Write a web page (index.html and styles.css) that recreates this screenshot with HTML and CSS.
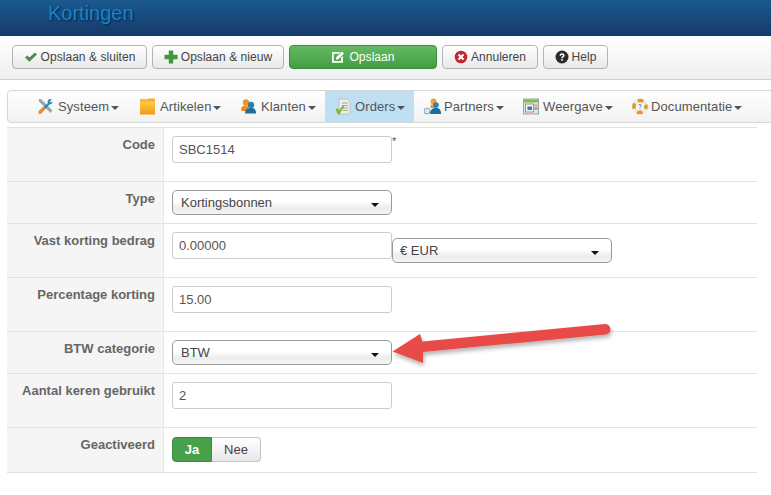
FILE: index.html
```html
<!DOCTYPE html>
<html lang="nl">
<head>
<meta charset="utf-8">
<title>Kortingen</title>
<link rel="stylesheet" href="styles.css">
</head>
<body>
<header class="titlebar"><h1 class="title">Kortingen</h1></header>

<div class="toolbar">
  <button class="btn btn-a" type="button">
    <svg class="bi" viewBox="0 0 14 14"><path d="M1 7.500 L3.200 5.400 L5.400 7.600 L10.900 2.400 L13 4.500 L5.400 11.800 Z" fill="#4a8f45"/></svg>Opslaan &amp; sluiten</button>
  <button class="btn btn-b" type="button">
    <svg class="bi" viewBox="0 0 14 14"><path d="M4.800 .5 H9.200 V4.800 H13.500 V9.200 H9.200 V13.500 H4.800 V9.200 H.5 V4.800 H4.800 Z" fill="#43953f"/></svg>Opslaan &amp; nieuw</button>
  <button class="btn btn-green" type="button">
    <svg class="bi" viewBox="0 0 14 14"><path d="M1 2 H9.500 L7.800 3.800 H2.800 V11 H10 V7.800 L12 6 V12.800 H1 Z" fill="#fff"/><path d="M5 7.500 L11 1.500 L13 3.500 L7 9.500 L5 9.500 Z" fill="#fff"/></svg>Opslaan</button>
  <button class="btn btn-c" type="button">
    <svg class="bi" viewBox="0 0 14 14"><circle cx="7" cy="7" r="6.300" fill="#c1272d"/><path d="M4.500 4.500 L9.500 9.500 M9.500 4.500 L4.500 9.500" stroke="#fff" stroke-width="2"/></svg>Annuleren</button>
  <button class="btn btn-d" type="button">
    <svg class="bi" viewBox="0 0 14 14"><circle cx="7" cy="7" r="6.500" fill="#2b2b2b"/><path d="M4.500 5.500 C4.500 2.600 9.600 2.600 9.600 5.400 C9.600 7 7.800 6.900 7.800 8.300 H6.200 C6.200 6.200 8 6.400 8 5.400 C8 4.400 6.200 4.500 6.100 5.700 Z" fill="#fff"/><rect x="6.200" y="9.100" width="1.600" height="1.600" fill="#fff"/></svg>Help</button>
</div>

<nav class="menu">
  <a class="item">
    <svg class="mi" viewBox="0 0 17 17"><path d="M2 1 L4 1 L15.500 12.500 L13.500 15 L2 3.500 Z" fill="#9aa7ad"/><path d="M15 1.500 L12 1 L10.500 3.500 L11 5 L2 13 C1 15 3 16.500 4.500 15 L12.500 6.500 L14.500 6 L16 3.500 L14 4.500 L12.800 3.400 Z" fill="#2b88b8"/><path d="M1.500 13.500 L6.500 8.500 L8.500 10.500 L3.500 15.800 C2 16.500 .8 15 1.500 13.500 Z" fill="#ee8f22"/></svg>
    <span>Systeem</span><i class="caret"></i></a>
  <a class="item">
    <svg class="mi mi-15" viewBox="0 0 15 17"><rect x="0" y="1" width="15" height="3.500" fill="#f6b93b"/><rect x="8" y=".5" width="7" height="2" fill="#f9a825"/><defs><linearGradient id="box" x1="0" y1="0" x2="0" y2="1"><stop offset="0" stop-color="#ffc94a"/><stop offset="1" stop-color="#f09a12"/></linearGradient></defs><rect x="0" y="4" width="15" height="12.500" fill="url(#box)"/></svg>
    <span>Artikelen</span><i class="caret"></i></a>
  <a class="item">
    <svg class="mi mi-15" viewBox="0 0 15 17"><circle cx="5" cy="4.500" r="3.200" fill="#f29325"/><path d="M0 12 C0 8 3 7.500 5 7.500 L8 9 L6 13 L1 13 Z" fill="#ee8a1c"/><circle cx="10" cy="7" r="3.200" fill="#2f7fb3"/><path d="M4 15.500 C4 11 7 10 10 10 C13 10 15 11 15 15.500 Z" fill="#1f6c9e"/></svg>
    <span>Klanten</span><i class="caret"></i></a>
  <a class="item active">
    <svg class="mi mi-16" viewBox="0 0 16 17"><path d="M4 1 H12 L15 4 V16 H4 Z" fill="#eeeeea" stroke="#b9b9b0" stroke-width=".8"/><path d="M7 5 H13 M7 7.500 H13 M7 10 H13 M8 12.500 H13" stroke="#a3a79c" stroke-width="1"/><path d="M.5 11.500 L2.500 10 L4 12.500 L8 7 L9.500 8 L4.500 16.500 L3 16.500 Z" fill="#86b52c"/></svg>
    <span>Orders</span><i class="caret"></i></a>
  <a class="item">
    <svg class="mi mi-tight" viewBox="0 0 17 17"><circle cx="9.500" cy="3.500" r="3" fill="#f0a030"/><path d="M6 10 L7 6.500 H12 L13 10 Z" fill="#ee9c28"/><circle cx="12" cy="7" r="2.800" fill="#2f7fb3"/><path d="M6 16 C6 11 9 10 12 10 C15 10 17 11 17 16 Z" fill="#1f6c9e"/><circle cx="3" cy="13" r="3" fill="#dfe7ee" stroke="#7b94ad" stroke-width=".8"/></svg>
    <span>Partners</span><i class="caret"></i></a>
  <a class="item">
    <svg class="mi mi-16" viewBox="0 0 16 16"><rect x=".5" y=".5" width="15" height="15" fill="#dfe6ea" stroke="#98a5ad"/><rect x="1" y="1" width="14" height="3" fill="#7dc04f"/><rect x="2.500" y="5.500" width="8" height="8" fill="#f3f6f8" stroke="#e2777b"/><rect x="4.500" y="8" width="4.500" height="3.500" fill="#2f7fb3"/><rect x="11.500" y="6" width="3" height="2" fill="#f0a030"/><rect x="11.500" y="9" width="3" height="2" fill="#6d8fa8"/></svg>
    <span>Weergave</span><i class="caret"></i></a>
  <a class="item">
    <svg class="mi mi-16 mi-tight" viewBox="0 0 16 16"><circle cx="8" cy="8" r="6" fill="none" stroke="#e9e9e4" stroke-width="3.600"/><circle cx="8" cy="8" r="6" fill="none" stroke="#e8962a" stroke-width="3.600" stroke-dasharray="5.400 4" stroke-dashoffset="2.700"/><circle cx="8" cy="8" r="3.400" fill="#f7f7f7"/><path d="M6.700 7 C6.700 5.600 9.300 5.600 9.300 7 C9.300 8 8 8 8 9 M8 10 V10.800" fill="none" stroke="#4d86b5" stroke-width="1"/></svg>
    <span>Documentatie</span><i class="caret"></i></a>
</nav>

<main class="form">
  <div class="row h54">
    <label class="lab">Code</label>
    <div class="field"><input class="inp" type="text" value="SBC1514"><sup class="req">*</sup></div>
  </div>
  <div class="row h42">
    <label class="lab">Type</label>
    <div class="field"><div class="sel">Kortingsbonnen<i class="sel-caret"></i></div></div>
  </div>
  <div class="row h54">
    <label class="lab">Vast korting bedrag</label>
    <div class="field"><input class="inp" type="text" value="0.00000"><div class="sel sel-eur">€ EUR<i class="sel-caret"></i></div></div>
  </div>
  <div class="row h54">
    <label class="lab">Percentage korting</label>
    <div class="field"><input class="inp" type="text" value="15.00"></div>
  </div>
  <div class="row h42">
    <label class="lab">BTW categorie</label>
    <div class="field"><div class="sel">BTW<i class="sel-caret"></i></div></div>
  </div>
  <div class="row h54">
    <label class="lab">Aantal keren gebruikt</label>
    <div class="field"><input class="inp" type="text" value="2"></div>
  </div>
  <div class="row h45">
    <label class="lab">Geactiveerd</label>
    <div class="field"><div class="toggle"><span class="yes">Ja</span><span class="no">Nee</span></div></div>
  </div>
</main>

<svg class="arrow" viewBox="0 0 240 60" aria-hidden="true">
  <defs><filter id="sh" x="-10%" y="-30%" width="120%" height="170%"><feDropShadow dx="1" dy="3" stdDeviation="2" flood-color="#000" flood-opacity=".3"/></filter></defs>
  <path d="M2.500 31.500 L30 14 L32.500 21.500 L215 4 C221 3.500 223 13.500 216 14.500 L33 32 L33 43 Z" fill="#e84c47" filter="url(#sh)"/>
</svg>
</body>
</html>
```
FILE: styles.css
```css
* { box-sizing: border-box; }
html, body { margin: 0; padding: 0; }
body {
  width: 771px;
  height: 495px;
  overflow: hidden;
  position: relative;
  background: #fff;
  font-family: "Liberation Sans", Arial, sans-serif;
  font-size: 12px;
  color: #555;
}
.titlebar {
  height: 36px;
  padding-left: 48px;
  background: linear-gradient(#1b5a8f, #153a69);
}
.title {
  margin: 0;
  font-size: 20px;
  line-height: 27px;
  font-weight: 400;
  color: #1286cf;
  text-shadow: 1px 1px 2px #0b2440;
}
.toolbar {
  height: 44px;
  display: flex;
  gap: 5px;
  padding: 9px 0 0 12px;
  background: linear-gradient(#fff, #efefef);
  border-bottom: 1px solid #cfcfcf;
}
.btn {
  height: 24px;
  display: flex;
  align-items: center;
  justify-content: center;
  gap: 3px;
  padding: 0;
  font: 12px "Liberation Sans", Arial, sans-serif;
  color: #444;
  background: linear-gradient(#fff, #e8e8e8);
  border: 1px solid #b4b4b4;
  border-radius: 4px;
  letter-spacing: .05px;
}
.btn-a { width: 135px; }
.btn-b { width: 132px; }
.btn-green {
  width: 148px;
  color: #fff;
  font-weight: 400;
  gap: 4px;
  background: linear-gradient(#62bb5f, #449d44);
  border-color: #3e8a3e;
}
.btn-c { width: 96px; }
.btn-d { width: 65px; }
.bi { width: 14px; height: 14px; flex: none; }

.menu {
  display: grid;
  grid-template-columns: 103px 101px 94px 89px 99px 109px 129px;
  height: 33px;
  margin: 10px 0 0 7px;
  width: 780px;
  padding-left: 19px;
  background: linear-gradient(#fff, #f1f1f1);
  border: 1px solid #d6d6d6;
  border-radius: 4px;
}
.item {
  display: flex;
  align-items: center;
  padding: 0 10px;
  font-size: 13px;
  letter-spacing: .1px;
  color: #555;
}
.item.active { background: #bfe0f3; }
.mi { width: 17px; height: 17px; margin-right: 4px; flex: none; }
.mi-15 { width: 15px; margin-right: 5px; }
.mi-16 { width: 16px; margin-right: 4px; }
.mi-tight { margin-right: 3px; }
.caret {
  width: 0;
  height: 0;
  margin: 2px 0 0 2px;
  border-left: 4px solid transparent;
  border-right: 4px solid transparent;
  border-top: 4px solid #555;
}

.form {
  width: 750px;
  margin: 4px 0 0 7px;
  border-top: 1px solid #e2e2e2;
}
.row {
  display: flex;
  border-bottom: 1px solid #e2e2e2;
}
.h54 { height: 54px; }
.h42 { height: 42px; }
.h45 { height: 45px; }
.lab {
  width: 157px;
  flex: none;
  padding: 9px 8px 0 0;
  text-align: right;
  font-size: 13px;
  line-height: 16px;
  font-weight: 700;
  color: #666;
  background: #f5f5f5;
  border-right: 1px solid #e8e8e8;
}
.field {
  display: flex;
  align-items: flex-start;
  padding: 8px 0 0 8px;
}
.inp {
  width: 220px;
  height: 27px;
  padding: 0 6px;
  font: 13px "Liberation Sans", Arial, sans-serif;
  color: #555;
  background: #fff;
  border: 1px solid #ccc;
  border-radius: 3px;
  outline: none;
}
.req { font-size: 11px; line-height: 11px; color: #555; }
.sel {
  position: relative;
  width: 220px;
  height: 25px;
  padding: 0 8px;
  font-size: 13px;
  line-height: 23px;
  color: #444;
  background: linear-gradient(#fff 0, #fff 45%, #ececec 75%, #f6f6f6 100%);
  border: 1px solid #9a9a9a;
  border-radius: 5px;
}
.sel-eur { margin-top: 6px; padding-left: 7px; }
.sel-caret {
  position: absolute;
  right: 12px;
  top: 12px;
  width: 0;
  height: 0;
  border-left: 4px solid transparent;
  border-right: 4px solid transparent;
  border-top: 4px solid #111;
}
.toggle { display: flex; height: 25px; margin-top: 1px; font-size: 13px; line-height: 23px; text-align: center; }
.yes {
  width: 40px;
  color: #fff;
  font-weight: 700;
  background: #47a04a;
  border: 1px solid #3e8a3e;
  border-radius: 4px 0 0 4px;
}
.no {
  width: 49px;
  color: #444;
  background: linear-gradient(#fff, #e8e8e8);
  border: 1px solid #c4c4c4;
  border-left: 0;
  border-radius: 0 4px 4px 0;
}
.arrow {
  position: absolute;
  left: 390px;
  top: 320px;
  width: 240px;
  height: 60px;
}
```
